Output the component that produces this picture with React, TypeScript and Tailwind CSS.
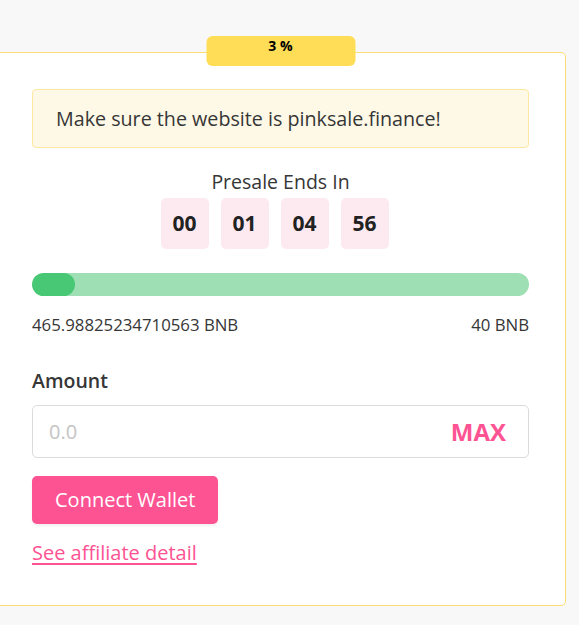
export default function App() {
  return (
    <div
      className="min-h-[625px] w-full bg-[#f8f8f8] pt-[52px] overflow-hidden"
      style={{ fontFamily: '"Open Sans", "Noto Sans", sans-serif' }}
    >
      <div className="relative -ml-[5px] w-[571px] h-[554px] bg-white border border-[#fcdc74] rounded-[5px] pl-[36px] pr-[36px] pt-[36px] text-[#363636]">
        {/* progress badge */}
        <div className="absolute left-1/2 -translate-x-1/2 -top-[17px] w-[149px] h-[30px] rounded-[6px] bg-[#ffdd57] text-center text-[14px] font-bold leading-[20px] text-black">
          3 %
        </div>

        <div className="h-[59px] flex items-center px-[23px] bg-[#fef9e6] border border-[#fde8a0] rounded-[4px] text-[19.7px] text-[#363636]">
          Make sure the website is pinksale.finance!
        </div>

        <div className="mt-[21px] flex flex-col items-center">
          <div className="text-[19.5px] leading-[26px]">Presale Ends In</div>
          <div className="mt-[3px] flex">
            {['00', '01', '04', '56'].map((v) => (
              <div
                key={v}
                className="mr-[12px] w-[48px] h-[51px] rounded-[5px] bg-[#fdeaf0] flex items-center justify-center text-[21px] font-bold text-[#222]"
              >
                {v}
              </div>
            ))}
          </div>
        </div>

        <div className="mt-[24px] h-[23px] rounded-full bg-[#9fdfb4] overflow-hidden">
          <div className="h-full w-[43px] rounded-full bg-[#48c774]" />
        </div>

        <div className="mt-[18px] flex justify-between text-[16.8px] leading-[22px]">
          <span>465.98825234710563 BNB</span>
          <span>40 BNB</span>
        </div>

        <div className="mt-[32px] text-[19.5px] font-semibold leading-[26px]">Amount</div>

        <div className="mt-[11px] h-[53px] flex items-center border border-[#dbdbdb] rounded-[5px] pl-[16px] pr-[22px]">
          <input
            placeholder="0.0"
            className="flex-1 outline-none text-[20px] text-[#363636] placeholder:text-[#c4c4c4] bg-transparent"
          />
          <span className="text-[24px] font-bold text-[#fd5393]">MAX</span>
        </div>

        <button className="mt-[18px] h-[48px] px-[23px] rounded-[5px] bg-[#fd5393] text-white text-[20px] shadow-[0_2px_3px_rgba(0,0,0,0.06)]">
          Connect Wallet
        </button>

        <div className="mt-[14px]">
          <a className="text-[20px] text-[#fd5393] underline decoration-2 underline-offset-[3px]">See affiliate detail</a>
        </div>
      </div>
    </div>
  )
}
